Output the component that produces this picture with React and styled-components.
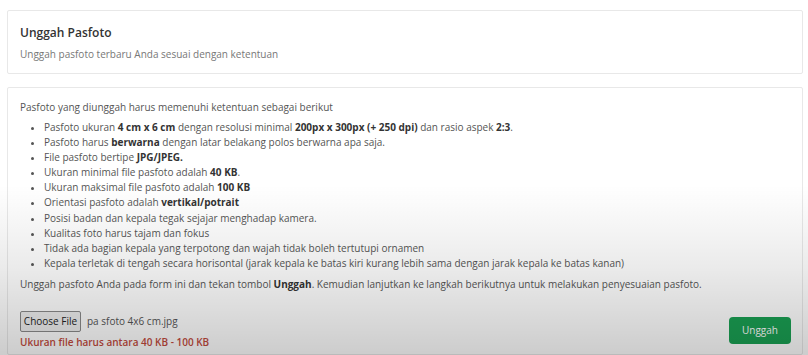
import React from 'react';
import styled, { createGlobalStyle } from 'styled-components';

const GlobalStyle = createGlobalStyle`
  html, body {
    margin: 0;
    padding: 0;
    background: #ffffff;
  }
  body {
    font-family: "Open Sans", "Liberation Sans", sans-serif;
    color: #555;
  }
`;

const Page = styled.div`
  position: relative;
  width: 808px;
  height: 355px;
  overflow: hidden;
  padding: 10px 5px 0 7px;
  box-sizing: border-box;
  display: flex;
  flex-direction: column;
  gap: 13px;
`;

// video-frame shading at the bottom of the screenshot
const Shade = styled.div`
  position: absolute;
  inset: 0;
  pointer-events: none;
  background: linear-gradient(
    to bottom,
    rgba(0, 0, 0, 0) 0%,
    rgba(0, 0, 0, 0) 52%,
    rgba(0, 0, 0, 0.08) 75%,
    rgba(0, 0, 0, 0.2) 100%
  );
`;

const Card = styled.section`
  background: #fff;
  border: 1px solid #e8e8e8;
  border-radius: 2px;
  box-sizing: border-box;
  padding: ${({ $pad }) => $pad};
  flex: ${({ $grow }) => ($grow ? 1 : 'none')};
`;

const Title = styled.h2`
  margin: 0;
  font-size: 12px;
  font-weight: 600;
  color: #333;
  line-height: 17px;
`;

const Subtitle = styled.p`
  margin: 6px 0 0;
  font-size: 10px;
  color: #777;
  line-height: 14px;
`;

const Text = styled.p`
  margin: 0;
  font-size: 10px;
  line-height: 15px;
  color: #555;

  b {
    color: #333;
    font-weight: 700;
  }
`;

const Rules = styled.ul`
  margin: 5px 0 6px;
  padding-left: 24px;
  font-size: 10px;
  line-height: 15.1px;
  color: #555;

  li::marker {
    font-size: 9px;
  }

  b {
    color: #333;
    font-weight: 700;
  }
`;

const Footer = styled.div`
  display: flex;
  justify-content: space-between;
  align-items: flex-end;
  margin-top: 19px;
`;

const FileBlock = styled.div`
  display: flex;
  flex-direction: column;
  gap: 3px;
`;

const FileRow = styled.div`
  display: flex;
  align-items: center;
  gap: 6px;
  font-size: 10px;
  color: #555;
`;

const FileButton = styled.button`
  font-family: "Open Sans", "Liberation Sans", sans-serif;
  font-size: 10px;
  color: #222;
  height: 21px;
  width: 61px;
  padding: 0;
  background: #efefef;
  border: 1px solid #8a8a8a;
  border-radius: 2px;
`;

const ErrorText = styled.div`
  font-size: 10px;
  font-weight: 600;
  color: #c24a3c;
  line-height: 14px;
`;

const SubmitButton = styled.button`
  font-family: "Open Sans", "Liberation Sans", sans-serif;
  font-size: 10px;
  color: #fff;
  background: #1aa053;
  border: none;
  border-radius: 4px;
  height: 27px;
  width: 62px;
  margin-right: -1px;
  margin-bottom: 5px;
`;

const rules = [
  <>Pasfoto ukuran <b>4 cm x 6 cm</b> dengan resolusi minimal <b>200px x 300px (+ 250 dpi)</b> dan rasio aspek <b>2:3</b>.</>,
  <>Pasfoto harus <b>berwarna</b> dengan latar belakang polos berwarna apa saja.</>,
  <>File pasfoto bertipe <b>JPG/JPEG.</b></>,
  <>Ukuran minimal file pasfoto adalah <b>40 KB</b>.</>,
  <>Ukuran maksimal file pasfoto adalah <b>100 KB</b></>,
  <>Orientasi pasfoto adalah <b>vertikal/potrait</b></>,
  <>Posisi badan dan kepala tegak sejajar menghadap kamera.</>,
  <>Kualitas foto harus tajam dan fokus</>,
  <>Tidak ada bagian kepala yang terpotong dan wajah tidak boleh tertutupi ornamen</>,
  <>Kepala terletak di tengah secara horisontal (jarak kepala ke batas kiri kurang lebih sama dengan jarak kepala ke batas kanan)</>,
];

export default function App() {
  return (
    <>
      <GlobalStyle />
      <Page>
        <Card $pad="13px 12px 12px">
          <Title>Unggah Pasfoto</Title>
          <Subtitle>Unggah pasfoto terbaru Anda sesuai dengan ketentuan</Subtitle>
        </Card>
        <Card $grow $pad="12px 12px 0">
          <Text>Pasfoto yang diunggah harus memenuhi ketentuan sebagai berikut</Text>
          <Rules>
            {rules.map((r, i) => (
              <li key={i}>{r}</li>
            ))}
          </Rules>
          <Text>
            Unggah pasfoto Anda pada form ini dan tekan tombol <b>Unggah</b>. Kemudian lanjutkan ke langkah berikutnya untuk melakukan penyesuaian pasfoto.
          </Text>
          <Footer>
            <FileBlock>
              <FileRow>
                <FileButton>Choose File</FileButton>
                <span>pa sfoto 4x6 cm.jpg</span>
              </FileRow>
              <ErrorText>Ukuran file harus antara 40 KB - 100 KB</ErrorText>
            </FileBlock>
            <SubmitButton>Unggah</SubmitButton>
          </Footer>
        </Card>
        <Shade />
      </Page>
    </>
  );
}
